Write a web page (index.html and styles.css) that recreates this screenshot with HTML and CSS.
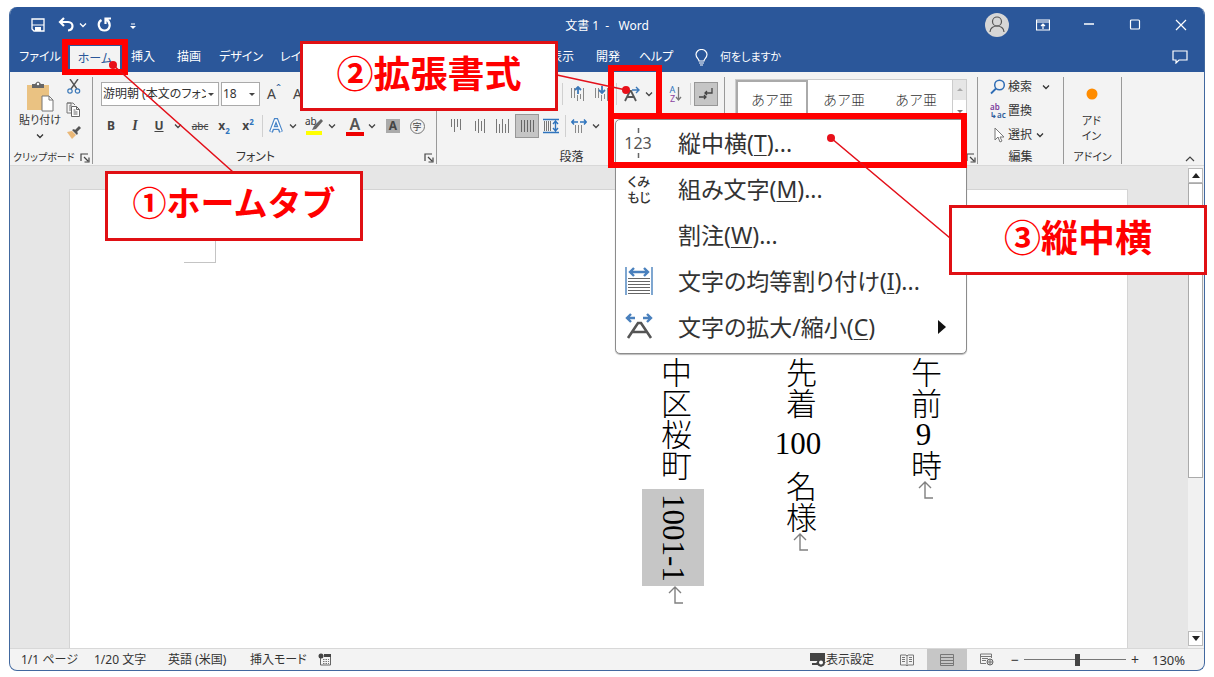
FILE: index.html
```html
<!DOCTYPE html>
<html lang="ja">
<head>
<meta charset="utf-8">
<title>文書 1 - Word</title>
<link rel="stylesheet" href="styles.css">
</head>
<body>
<svg class="defs" aria-hidden="true">
  <symbol id="chev" viewBox="0 0 8 8"><path d="M1 2.5l3 3 3-3" fill="none" stroke="currentColor" stroke-width="1.3"/></symbol>
  <symbol id="launch" viewBox="0 0 10 10"><path d="M1 8V1h7M4 4l4 4M9 4.500V9H4.500" fill="none" stroke="#444" stroke-width="1.200"/></symbol>
  <symbol id="pmark" viewBox="0 0 18 20"><path d="M3 7l6-6 6 6M9 1v16h8" fill="none" stroke="#808080" stroke-width="1.400"/></symbol>
</svg>
<div class="window">
  <header class="titlebar">
    <div class="quick">
      <button class="q-save" aria-label="保存"><svg width="14" height="14" viewBox="0 0 14 14"><path d="M1 1h12v12H3l-2-2z" fill="none" stroke="#fff" stroke-width="1.300"/><path d="M1 7h12" stroke="#fff"/><path d="M4 9h6v4H4z" fill="#fff"/></svg></button>
      <button class="q-undo" aria-label="元に戻す"><svg width="17" height="15" viewBox="0 0 17 15"><path d="M6 1L2 5l4 4M2 5h8c6 0 6 8 0 8.500" fill="none" stroke="#fff" stroke-width="2.200"/></svg></button>
      <button class="q-chev" aria-label="元に戻す一覧"><svg width="8" height="8"><use href="#chev"/></svg></button>
      <button class="q-redo" aria-label="繰り返し"><svg width="15" height="15" viewBox="0 0 15 15"><path d="M4.500 3C-.5 6 2 13.500 7.500 13.500S15 6 9 2M14 1.500H8.500V7" fill="none" stroke="#fff" stroke-width="2.200"/></svg></button>
      <button class="q-more" aria-label="カスタマイズ"><svg width="6" height="7" viewBox="0 0 6 7"><path d="M1 1h4" stroke="#fff"/><path d="M0 3h6L3 6z" fill="#fff"/></svg></button>
    </div>
    <h1 class="title">文書 1&nbsp; -&nbsp; &nbsp;Word</h1>
    <div class="sys">
      <button aria-label="アカウント"><svg width="24" height="24" viewBox="0 0 24 24"><circle cx="12" cy="12" r="12" fill="#d6d6d6"/><circle cx="12" cy="8.500" r="4.500" fill="none" stroke="#555" stroke-width="1.200"/><path d="M5 19c0-8 14-8 14 0" fill="none" stroke="#555" stroke-width="1.200"/></svg></button>
      <button aria-label="リボンの表示オプション"><svg width="14" height="12" viewBox="0 0 14 12"><path d="M.5 1h13v10H.5zM.5 3h13M7 10V5M5 7l2-2 2 2" fill="none" stroke="#fff" stroke-width="1.200"/></svg></button>
      <button aria-label="最小化"><svg width="10" height="10"><path d="M0 4h10" stroke="#fff" stroke-width="1.300"/></svg></button>
      <button aria-label="最大化"><svg width="12" height="12"><rect x="1.500" y="1" width="9" height="9" rx="1" fill="none" stroke="#fff" stroke-width="1.200"/></svg></button>
      <button aria-label="閉じる"><svg width="12" height="12"><path d="M1 1l10 10M11 1L1 11" stroke="#fff" stroke-width="1.200"/></svg></button>
    </div>
  </header>

  <nav class="tabs">
    <button>ファイル</button><button class="on">ホーム</button><button>挿入</button><button>描画</button><button>デザイン</button><button>レイアウト</button>
    <button class="t-view">表示</button><button>開発</button><button>ヘルプ</button>
    <button class="tell"><svg width="13" height="17" viewBox="0 0 13 17"><path d="M4 12c0-2-3-3-3-6.500a5.500 5 0 0 1 11 0C12 9 9 10 9 12zM4 14h5M5 16h3" fill="none" stroke="#fff" stroke-width="1.200"/></svg>何をしますか</button>
    <button class="comment" aria-label="コメント"><svg width="16" height="14" viewBox="0 0 16 14"><path d="M1 1h14v9H7l-3 3v-3H1z" fill="none" stroke="#fff" stroke-width="1.200"/></svg></button>
  </nav>

  <section class="ribbon">
    <div class="group g-clip">
      <div class="clip-body">
        <button class="paste"><svg width="28" height="31" viewBox="0 0 28 31"><path d="M1 4h22v25H1z" fill="#eac282"/><path d="M6 3h3q3-5 6 0h3v4H6z" fill="#666"/><circle cx="12" cy="3" r="1.200" fill="#fff"/><path d="M16 15h7l4 4v11H16z" fill="#fff" stroke="#777"/><path d="M23 15v4h4" fill="none" stroke="#777"/></svg><span>貼り付け</span><svg width="8" height="8"><use href="#chev"/></svg></button>
        <div class="clip-side">
          <button aria-label="切り取り"><svg width="14" height="15" viewBox="0 0 14 15"><path d="M3 0l7 10M11 0L4 10" stroke="#555" stroke-width="1.400"/><circle cx="3" cy="12" r="2.200" fill="none" stroke="#3b78b8" stroke-width="1.200"/><circle cx="10.500" cy="12" r="2.200" fill="none" stroke="#3b78b8" stroke-width="1.200"/></svg></button>
          <button aria-label="コピー"><svg width="15" height="15" viewBox="0 0 15 15"><path d="M5 4V1h-4v10h4M1 1h6l2 2M3 4h2M3 6h2M3 8h2" fill="none" stroke="#777"/><path d="M5.500 4.500h5l3 3v7h-8zM10.500 4.500v3h3M7.500 8h2M7.500 10h4M7.500 12h4" fill="#fff" stroke="#666"/></svg></button>
          <button aria-label="書式のコピー"><svg width="14" height="13" viewBox="0 0 14 13"><path d="M0 6l5-1 4 4-4 4z" fill="#eab878"/><path d="M5 4l5 5 1-2-1-1 4-4-2-2-4 4-1-1z" fill="#555"/></svg></button>
        </div>
      </div>
      <footer><span>クリップボード</span><button class="launcher" aria-label="クリップボードの詳細"><svg width="10" height="10"><use href="#launch"/></svg></button></footer>
    </div>

    <div class="group g-font">
      <div class="rows">
        <div class="row fields">
          <label class="combo face"><select aria-label="フォント"><option>游明朝 (本文のフォン)</option></select><svg width="6" height="4"><path d="M0 0h6L3 3z" fill="#444"/></svg></label>
          <label class="combo size"><select aria-label="フォント サイズ"><option>18</option></select><svg width="6" height="4"><path d="M0 0h6L3 3z" fill="#444"/></svg></label>
          <button class="tool grow">A<sup>ˆ</sup></button><button class="tool grow">A<sup>ˇ</sup></button>
        </div>
        <div class="row">
          <button class="tool b">B</button><button class="tool i">I</button><button class="tool u">U</button><button class="drop" aria-label="下線の種類"><svg width="8" height="8"><use href="#chev"/></svg></button>
          <button class="tool strike">abc</button><button class="tool script">x<sub>2</sub></button><button class="tool script">x<sup>2</sup></button><i class="sep"></i>
          <div class="split"><button aria-label="文字の効果"><svg width="16" height="16" viewBox="0 0 16 16"><path d="M3 14L7.500 2h1L13 14M5 10h6" fill="none" stroke="#4a86c8" stroke-width="4"/><path d="M3 13.500L7.500 2h1L13 13.500M5 10h6" fill="none" stroke="#fff" stroke-width="1.600"/></svg></button><button class="drop" aria-label="効果の一覧"><svg width="8" height="8"><use href="#chev"/></svg></button></div>
          <div class="split"><button class="mark-pen"><span>ab</span><svg width="18" height="18" viewBox="0 0 18 18"><path d="M0 14h16v4H0z" fill="#ff0"/><path d="M15 2l-7 7-2 4 4-1 7-8z" fill="#666"/></svg></button><button class="drop" aria-label="蛍光ペンの色"><svg width="8" height="8"><use href="#chev"/></svg></button></div>
          <div class="split"><button class="ink">A</button><button class="drop" aria-label="文字の色"><svg width="8" height="8"><use href="#chev"/></svg></button></div>
          <button class="tool shade"><span>A</span></button><button class="tool enclosed"><span>字</span></button>
        </div>
      </div>
      <footer><span>フォント</span><button class="launcher" aria-label="フォントの詳細"><svg width="10" height="10"><use href="#launch"/></svg></button></footer>
    </div>

    <div class="group g-para">
      <div class="rows">
        <div class="row para-top"><i class="sep"></i>
          <button class="tool" aria-label="インデント減"><svg width="16" height="16" viewBox="0 0 16 16"><path d="M1.500 2v10M4.500 2v10M7.500 9v6M10.500 8v5M13.500 2v13" stroke="#888"/><path d="M8 8V1M5 4l3-3 3 3" fill="none" stroke="#3b78b8" stroke-width="1.800"/></svg></button>
          <button class="tool" aria-label="インデント増"><svg width="16" height="16" viewBox="0 0 16 16"><path d="M1.500 2v10M4.500 2v10M7.500 9v6M10.500 8v5M13.500 2v13" stroke="#888"/><path d="M8 0v7M5 4l3 3 3-3" fill="none" stroke="#3b78b8" stroke-width="1.800"/></svg></button><i class="sep"></i>
          <div class="split ext"><button aria-label="拡張書式"><svg width="16" height="16" viewBox="0 0 16 16"><path d="M1 15L6 5h1l5 10M3.500 11h6" fill="none" stroke="#555" stroke-width="1.800"/><path d="M8 4h6M12 1l3 3-3 3" fill="none" stroke="#3b78b8" stroke-width="1.400"/></svg></button><button class="drop" aria-label="拡張書式の一覧"><svg width="8" height="8"><use href="#chev"/></svg></button></div>
          <button class="tool sort"><span class="az"><b>A</b><b class="z">Z</b></span><svg width="7" height="16" viewBox="0 0 7 16"><path d="M3.500 1v13M1 11l2.500 3L6 11" fill="none" stroke="#777" stroke-width="1.300"/></svg></button><i class="sep"></i>
          <button class="tool pressed" aria-label="編集記号の表示"><svg width="14" height="14" viewBox="0 0 14 14"><path d="M13 1v5H6M8 4L6 6l2 2M0 10h7M5 8l2 2-2 2" fill="none" stroke="#444" stroke-width="1.300"/></svg></button>
        </div>
        <div class="row">
          <button class="tool" aria-label="上揃え"><svg width="16" height="16"><path d="M4.500 1v8M7.500 1v13M10.500 1v8M13.500 1v11" stroke="#777"/></svg></button>
          <button class="tool" aria-label="上下中央揃え"><svg width="16" height="16"><path d="M4.500 3v10M7.500 1v14M10.500 3v10M13.500 1v14" stroke="#777"/></svg></button>
          <button class="tool" aria-label="下揃え"><svg width="16" height="16"><path d="M1.500 1v14M4.500 6v9M7.500 1v14M10.500 6v9M13.500 1v14" stroke="#777"/></svg></button>
          <button class="tool pressed" aria-label="両端揃え"><svg width="16" height="16"><path d="M2.500 2v12M5.500 2v12M8.500 2v12M11.500 2v12M14.500 2v12" stroke="#666"/></svg></button>
          <button class="tool" aria-label="均等割り付け"><svg width="16" height="16" viewBox="0 0 16 16"><path d="M1.500 3v10M3.500 3v10M5.500 3v10M7.500 3v10" stroke="#777"/><path d="M0 1.500h16M0 14.500h16M12.500 3v10M10 6l2.500-3L15 6M10 10l2.500 3 2.500-3" fill="none" stroke="#2f74bd" stroke-width="1.400"/></svg></button><i class="sep"></i>
          <div class="split"><button aria-label="行間"><svg width="16" height="16" viewBox="0 0 16 16"><path d="M4.500 7v8M7.500 7v8M10.500 7v8" stroke="#888"/><path d="M7 4H1M3 1.500L.8 4 3 6.500M9 4h6M13 1.500L15.200 4 13 6.500" fill="none" stroke="#2f74bd" stroke-width="1.400"/></svg></button><button class="drop" aria-label="行間の一覧"><svg width="8" height="8"><use href="#chev"/></svg></button></div>
        </div>
      </div>
      <footer class="para-label"><span>段落</span></footer>
    </div>

    <div class="group g-style">
      <div class="gallery">
        <button class="sel">あア亜</button><button>あア亜</button><button>あア亜</button>
        <div class="spin"><button class="off" aria-label="上へ"><svg width="6" height="4"><path d="M0 3h6L3 0z" fill="#aaa"/></svg></button><button aria-label="下へ"><svg width="6" height="4"><path d="M0 0h6L3 3z" fill="#777"/></svg></button></div>
      </div>
      <footer><button class="launcher" aria-label="スタイルの詳細"><svg width="10" height="10"><use href="#launch"/></svg></button></footer>
    </div>

    <div class="group g-edit">
      <div class="edit-list">
        <button><svg width="16" height="16" viewBox="0 0 16 16"><circle cx="9.500" cy="6" r="4.800" fill="none" stroke="#2f6db5" stroke-width="1.500"/><path d="M6 9.500L1 14.500" stroke="#2f6db5" stroke-width="1.800"/></svg>検索<svg class="far" width="8" height="8"><use href="#chev"/></svg></button>
        <button><span class="repl"><b>ab</b><b class="ac">↳ac</b></span>置換</button>
        <button><svg width="16" height="16" viewBox="0 0 16 16"><path d="M5 1v12l3-3 2 5 2-1-2-4h4z" fill="#fff" stroke="#777"/></svg>選択<svg width="8" height="8"><use href="#chev"/></svg></button>
      </div>
      <footer><span>編集</span></footer>
    </div>

    <div class="group g-add">
      <button class="addin"><svg width="14" height="14"><circle cx="7" cy="7" r="5.500" fill="#ff8c00"/></svg><span>アド<br>イン</span></button>
      <footer><span>アドイン</span></footer>
    </div>
    <button class="collapse" aria-label="リボンを折りたたむ"><svg width="10" height="7"><path d="M1 6l4-4 4 4" fill="none" stroke="#444" stroke-width="1.200"/></svg></button>
  </section>

  <main class="workspace">
    <article class="page">
      <i class="crop"></i>
      <p>午前<span class="tcy">9</span>時<svg class="pm" width="18" height="20"><use href="#pmark"/></svg></p>
      <p>先着<span class="wide">100</span>名様<svg class="pm" width="18" height="20"><use href="#pmark"/></svg></p>
      <p>中区桜町<mark>1001-1</mark><svg class="pm" width="18" height="20"><use href="#pmark"/></svg></p>
    </article>
    <div class="scroll">
      <button aria-label="上へスクロール"><svg width="8" height="5"><path d="M0 5h8L4 0z" fill="#222"/></svg></button>
      <i class="thumb"></i>
      <button class="down" aria-label="下へスクロール"><svg width="8" height="5"><path d="M0 0h8L4 5z" fill="#222"/></svg></button>
    </div>
  </main>

  <footer class="status">
    <span class="s-page">1/1 ページ</span><span class="s-count">1/20 文字</span><span class="s-lang">英語 (米国)</span><span class="s-mode">挿入モード</span>
    <svg width="14" height="13" viewBox="0 0 14 13"><path d="M2.500 3v9h10V3" fill="none" stroke="#666"/><circle cx="3" cy="3" r="2.500" fill="#444"/><path d="M6 1h7v3H6z" fill="#444"/><path d="M5 6.500h6M5 8.500h6M5 10.500h6" stroke="#777" stroke-dasharray="1.500 1"/></svg>
    <div class="s-right">
      <button class="s-disp"><svg width="16" height="14" viewBox="0 0 16 14"><path d="M0 0h15v8H0zM2 10h6v2H2z" fill="#444"/><circle cx="11" cy="9.500" r="3" fill="#fff" stroke="#444" stroke-width="2"/><path d="M11 5v9M6.500 9.500h9" stroke="#444" stroke-dasharray="2 5"/></svg>表示設定</button>
      <button class="view" aria-label="閲覧モード"><svg width="14" height="12" viewBox="0 0 14 12"><path d="M.5 1H6l1 1 1-1h5.500v10H8l-1 1-1-1H.5zM7 2v9M2 3.500h3M2 5.500h3M2 7.500h3M9 3.500h3M9 5.500h3M9 7.500h3" fill="none" stroke="#777"/></svg></button>
      <button class="view cur" aria-label="印刷レイアウト"><svg width="14" height="12"><path d="M.5 .5h13v11H.5zM0 3.500h14M0 6.500h14M0 9.500h14" fill="none" stroke="#777"/></svg></button>
      <button class="view" aria-label="Web レイアウト"><svg width="14" height="13" viewBox="0 0 14 13"><path d="M11.500 5V1H.5v9.500H6M1 3.500h10M2 5.500h6M2 7.500h4" fill="none" stroke="#777"/><circle cx="10" cy="9" r="3" fill="#ddd" stroke="#666"/><path d="M7 9h6M10 6v6" stroke="#777"/></svg></button>
      <button class="zoom-btn" aria-label="縮小">−</button><input class="zoom" type="range" min="0" max="100" value="53" aria-label="ズーム"><button class="zoom-btn" aria-label="拡大">+</button>
      <span class="pct">130%</span>
    </div>
  </footer>
</div>

<div class="menu" role="menu">
  <button role="menuitem"><svg width="30" height="32" viewBox="0 0 30 32"><path d="M14.500 1v5M14.500 26v5" stroke="#666" stroke-width="1.500"/><text x="14" y="22" text-anchor="middle" class="m123">123</text></svg><span>縦中横(<u>T</u>)...</span></button>
  <button role="menuitem"><span class="kumi">くみ<br>もじ</span><span>組み文字(<u>M</u>)...</span></button>
  <button role="menuitem"><i></i><span>割注(<u>W</u>)...</span></button>
  <button role="menuitem"><svg width="30" height="32" viewBox="0 0 30 32"><path d="M2 2v28M28 2v28" stroke="#3b78b8" stroke-width="1.300"/><path d="M6 7h18M10 3L6 7l4 4M20 3l4 4-4 4" fill="none" stroke="#4a80bd" stroke-width="2.400"/><path d="M4 13.500h22M4 16.500h22M4 19.500h22M4 22.500h22M4 25.500h22M4 28.500h22" stroke="#666"/></svg><span>文字の均等割り付け(<u>I</u>)...</span></button>
  <button role="menuitem"><svg width="30" height="32" viewBox="0 0 30 32"><path d="M11 7H3M7 3L3 7l4 4M19 7h8M23 3l4 4-4 4" fill="none" stroke="#4a80bd" stroke-width="2.400"/><path d="M4 27L14 12h3l10 15M8.500 21h14" fill="none" stroke="#555" stroke-width="2.600"/></svg><span>文字の拡大/縮小(<u>C</u>)</span><svg class="more" width="8" height="14"><path d="M0 0l8 7-8 7z" fill="#111"/></svg></button>
</div>

<i class="frame f-home"></i><i class="frame f-ext"></i><i class="frame f-tate"></i>
<svg class="leads" width="1214" height="280"><g stroke="#e3101a" stroke-width="1.600"><path d="M113 65L233 172M557 75l69 15M831 138l119 100"/></g><g fill="#e8101a"><circle cx="113" cy="65" r="4"/><circle cx="626" cy="90" r="4"/><circle cx="831" cy="138" r="4"/></g></svg>
<div class="note n1">①ホームタブ</div><div class="note n2">②拡張書式</div><div class="note n3">③縦中横</div>
</body>
</html>
```
FILE: styles.css
```css
* { box-sizing: border-box; }
body {
  margin: 0; padding: 7px 9px 6px; height: 100vh; display: flex; position: relative; overflow: hidden;
  background: #fff; color: #333; font: 12px/16px "Noto Sans", "Noto Sans CJK JP", sans-serif; font-feature-settings: "palt";
}
button { border: 0; padding: 0; margin: 0; background: none; color: inherit; font: inherit; font-feature-settings: inherit; display: flex; align-items: center; justify-content: center; white-space: nowrap; }
svg { flex: none; }
.defs { position: absolute; width: 0; height: 0; }
.window { flex: 1; min-width: 0; display: flex; flex-direction: column; border: 1px solid #41689f; border-top: 0; border-radius: 8px; overflow: hidden; background: #f3f3f3; }

.titlebar { height: 35px; flex: none; display: grid; grid-template-columns: 1fr auto 1fr; align-items: center; background: #2b579a; color: #fff; }
.quick { display: flex; align-items: center; padding-left: 21px; }
.q-undo { margin-left: 13px; }
.q-chev { margin-left: 4px; }
.q-redo { margin-left: 10px; }
.q-more { margin-left: 18px; padding-top: 4px; }
.title { margin: 0; padding-top: 2px; font-size: 12px; font-weight: 400; }
.sys { display: flex; justify-content: flex-end; }
.sys button { width: 46px; height: 32px; }

.tabs { height: 30px; flex: none; display: grid; grid-template-columns: 60px 50px 46px 46px 58px 269px 46px 46px 50px auto 1fr; background: #2b579a; color: #fff; }
.tabs .on { background: #f3f3f3; color: #2b579a; margin-top: 4px; }
.tabs button:nth-child(6) { justify-content: flex-start; padding-left: 10px; }
.tabs .tell { padding-left: 14px; gap: 12px; font-size: 11px; }
.tabs .comment { justify-self: end; padding-right: 16px; }

.ribbon { height: 94px; flex: none; display: flex; position: relative; border-bottom: 1px solid #d8d8d8; }
.group { margin: 5px 0 1px; border-right: 1px solid #999; display: flex; flex-direction: column; flex: none; }
.group > footer { height: 14px; margin-top: auto; display: flex; align-items: center; justify-content: center; position: relative; }
.launcher { position: absolute; right: 2px; top: 3px; }
.g-clip { width: 83px; }
.g-font { width: 344px; }
.g-para { width: 288px; }
.g-style { width: 253px; }
.g-edit { width: 86px; }
.g-add { width: 58px; }
.g-clip > footer { justify-content: flex-start; padding-left: 3px; font-size: 10px; }
.g-font > footer { padding-right: 18px; }
.group > .para-label { padding-right: 18px; }
.clip-body { display: flex; }
.paste { width: 52px; padding: 3px 0 0 8px; flex-direction: column; }
.paste span { padding-bottom: 4px; font-size: 11px; }
.clip-side { display: flex; flex-direction: column; gap: 8px; padding: 2px 0 0 4px; }
.clip-side button { height: 15px; }

.rows { display: flex; flex-direction: column; gap: 8px; padding: 5px 0 0 6px; }
.row { display: flex; align-items: center; height: 24px; }
.tool { width: 24px; height: 24px; color: #444; flex: none; }
.drop { width: 14px; height: 24px; color: #444; }
.sep { width: 1px; height: 22px; margin: 0 3px 0 2px; background: #d0d0d0; flex: none; }
.split { display: flex; align-items: center; width: 34px; flex: none; }
.split > button:first-child { width: 20px; height: 20px; }
.split + .split { margin-left: 5px; }
.pressed { background: #c5c5c5; border: 1px solid #979797; }
.fields { gap: 2px; padding-left: 2px; }
.combo { position: relative; height: 24px; border: 1px solid #aaa; background: #fff; display: block; }
.combo select { appearance: none; width: 100%; height: 100%; border: 0; padding: 0 12px 0 1px; background: none; font: inherit; font-feature-settings: inherit; color: #333; }
.combo svg { position: absolute; right: 4px; top: 10px; }
.face { width: 118px; }
.size { width: 39px; }
.grow { font-size: 14px; }
.grow sup { font-size: 12px; line-height: 8px; align-self: flex-start; padding-top: 4px; color: #2f5d9a; }
.b { font-weight: 700; }
.i { font: italic 700 14px "Liberation Serif", serif; }
.u { font-weight: 700; text-decoration: underline; }
.strike { font-size: 10px; text-decoration: line-through; margin-left: 3px; }
.script { font-weight: 700; }
.script sub, .script sup { font-size: 8px; line-height: 8px; color: #2f74bd; }
.script sub { align-self: flex-end; padding-bottom: 3px; }
.script sup { align-self: flex-start; padding-top: 4px; }
.mark-pen { position: relative; }
.mark-pen span { position: absolute; left: 0; top: -2px; font-size: 10px; line-height: 14px; }
.split .ink { width: 16px; height: 16px; margin: 0 2px; font-weight: 600; font-size: 16px; line-height: 12px; border-bottom: 4px solid #e00; color: #555; }
.shade { margin-left: 3px; font-weight: 700; }
.shade span { width: 14px; line-height: 14px; background: #aaa; }
.enclosed span { width: 15px; height: 15px; border: 1px solid #777; border-radius: 50%; font-size: 9px; line-height: 13px; }
.para-top { padding-left: 117px; }
.ext { padding-left: 2px; width: 36px; }
.sort { margin-left: 8px; }
.az { display: flex; flex-direction: column; font-size: 9px; line-height: 9px; color: #2f74bd; }
.az b { font-weight: 400; }
.az .z { color: #8d44a0; }

.gallery { display: flex; margin: 2px 10px 0; height: 44px; border: 1px solid #ccc; background: #fff; font: 14px/18px "Liberation Serif", "Noto Sans CJK JP", serif; font-weight: 300; }
.gallery > button { width: 72px; flex: none; }
.gallery .sel { border: 2px solid #aaa; }
.spin { margin-left: auto; width: 15px; display: grid; grid-template-rows: 20px 24px; border-left: 1px solid #ccc; }
.spin .off { background: #e6e6e6; }
.g-style .launcher { right: 1px; }

.edit-list { display: flex; flex-direction: column; gap: 8px; padding: 2px 0 0 12px; }
.edit-list button { justify-content: flex-start; gap: 2px; height: 16px; }
.edit-list svg:last-child { margin-left: 2px; }
.edit-list .far:last-child { margin-left: 8px; }
.repl { width: 16px; display: flex; flex-direction: column; font-size: 8px; line-height: 8px; color: #7b3a9a; text-align: left; }
.repl b { font-weight: 600; }
.repl .ac { color: #2f5d9a; }
.addin { flex-direction: column; padding: 10px 2px 0 0; gap: 12px; }
.addin span { line-height: 15px; text-align: center; font-size: 11px; }
.g-add > footer { font-size: 11px; }
.collapse { margin: auto 9px 3px auto; }

.workspace { flex: 1; min-height: 0; display: flex; background: #e6e6e6; }
.page {
  flex: 1; margin: 23px 60px 0 59px; padding: 167px 173px 0 0; position: relative; overflow: hidden;
  background: #fff; border: 1px solid #d4d4d4; border-bottom: 0; color: #000; writing-mode: vertical-rl;
  font: 300 31px/62px "Liberation Serif", "Noto Sans CJK JP", serif; font-feature-settings: normal; white-space: nowrap;
}
.page p { margin: 0 0 0 63px; }
.crop { position: absolute; left: 114px; top: 42px; width: 32px; height: 31px; border: solid #c4c4c4; border-width: 0 1px 1px 0; }
.tcy { text-combine-upright: all; }
.wide { writing-mode: horizontal-tb; display: inline-block; height: 52px; line-height: 50px; }
.page mark { display: inline-block; margin-top: 8px; padding: 5px 0 4px; background: #c6c6c6; color: inherit; }
.pm { vertical-align: middle; margin-right: 10px; }
.scroll { width: 16px; flex: none; display: flex; flex-direction: column; background: #f1f1f1; padding: 2px 1px 2px 0; }
.scroll button { height: 15px; flex: none; background: #fff; border: 1px solid #bbb; }
.thumb { flex: 0 1 295px; background: #fff; border: 1px solid #aaa; }
.scroll .down { margin-top: auto; }

.status { height: 22px; flex: none; display: flex; align-items: center; padding-left: 11px; border-top: 1px solid #d8d8d8; }
.s-page { width: 73px; }
.s-count { width: 74px; }
.s-lang { width: 82px; }
.s-mode { width: 68px; }
.s-right { margin-left: auto; display: flex; align-items: center; height: 100%; }
.s-disp { margin-right: 13px; }
.view { width: 40px; height: 21px; }
.view.cur { background: #c6c6c6; }
.zoom-btn { width: 16px; font-size: 14px; }
.zoom { appearance: none; width: 102px; height: 16px; margin: 0 1px; background: linear-gradient(#777, #777) center / 100% 1px no-repeat; }
.zoom::-webkit-slider-thumb { appearance: none; width: 5px; height: 12px; background: #444; }
.pct { width: 61px; padding-left: 9px; font-size: 13px; }

.menu { position: absolute; left: 615px; top: 119px; width: 352px; padding-bottom: 3px; background: #fff; border: 1px solid #8c8c8c; border-radius: 5px; font-size: 23px; line-height: 32px; color: #333; box-shadow: 0 1px 1px #bbb; }
.menu button { width: 100%; height: 46px; display: grid; grid-template-columns: 30px minmax(0, 1fr) 8px; column-gap: 24px; padding: 0 20px 0 8px; text-align: left; }
.menu u { text-underline-offset: 3px; text-decoration-thickness: 1px; }
.m123 { font-size: 16px; fill: #555; }
.kumi { font-size: 13px; line-height: 16px; text-align: center; font-weight: 500; }

.frame { position: absolute; border: 6px solid #f00; }
.f-home { left: 62px; top: 39px; width: 66px; height: 36px; }
.f-ext { left: 608px; top: 65px; width: 54px; height: 54px; }
.f-tate { left: 608px; top: 113px; width: 359px; height: 55px; }
.leads { position: absolute; left: 0; top: 0; pointer-events: none; }
.note { position: absolute; width: 258px; height: 70px; border: 3px solid #e01014; background: #fff; color: #f00; font: 700 37px/56px "Noto Sans CJK JP", sans-serif; text-align: center; white-space: nowrap; }
.n1 { left: 105px; top: 171px; font-size: 34px; }
.n2 { left: 300px; top: 41px; }
.n3 { left: 949px; top: 205px; }
```
